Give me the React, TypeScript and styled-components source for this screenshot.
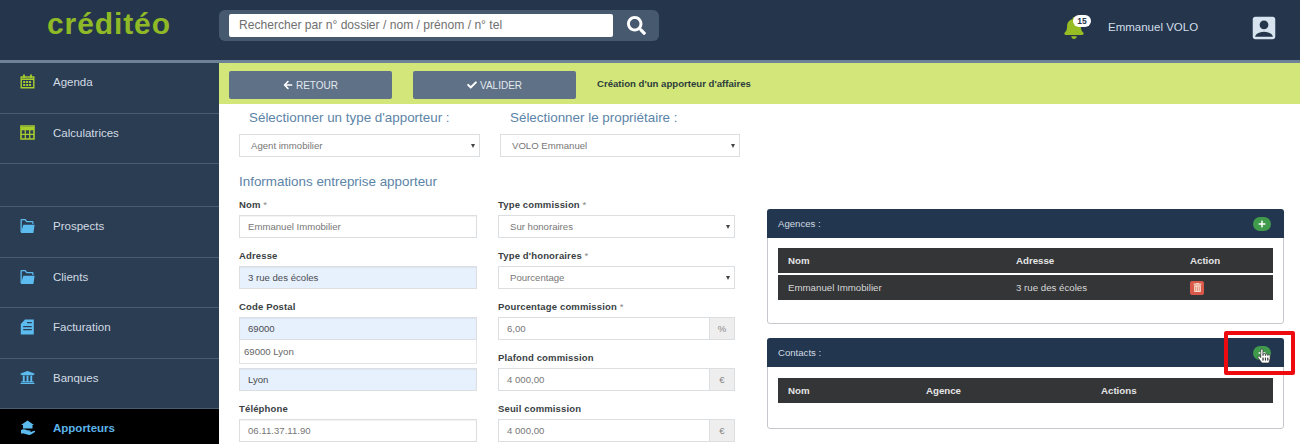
import styled, { createGlobalStyle } from "styled-components";
import { ReactNode } from "react";
import {
  FaArrowLeft,
  FaBell,
  FaCheck,
  FaHandPointer,
  FaPlus,
  FaSearch,
  FaTrashAlt,
  FaUniversity,
} from "react-icons/fa";
import { MdAccountBox } from "react-icons/md";

const CalendarIcon = () => (
  <svg width="15" height="15" viewBox="0 0 15 15" fill="none" stroke="currentColor">
    <path d="M1.2 3h12.6v10.8H1.2z" strokeWidth="1.4" />
    <path d="M1 5.2h13" strokeWidth="1.6" />
    <path d="M4 0.6v3.4M11 0.6v3.4" strokeWidth="1.8" />
    <path d="M3.2 8h8.6M3.2 11h8.6" strokeWidth="1.8" strokeDasharray="2 .9" />
  </svg>
);

const TableIcon = () => (
  <svg width="15" height="15" viewBox="0 0 15 15" fill="none" stroke="currentColor">
    <path d="M1 1h13v13H1z" strokeWidth="1.6" />
    <path d="M1 3.6h13" strokeWidth="3.4" />
    <path d="M1 9.4h13M5.3 5v9M9.7 5v9" strokeWidth="1.3" />
  </svg>
);

const FolderIcon = () => (
  <svg width="15" height="16" viewBox="0 0 15 16" fill="currentColor">
    <path d="M0.5 2 Q0.5 1 1.5 1 H5.5 L7 3 H12.5 Q13.5 3 13.5 4 V6 H12.3 V4.3 H6.3 L4.8 2.3 H1.8 V14 H0.5 Z" />
    <path d="M3.3 6.8 H14.6 L13.4 15 H0.8 Z" />
  </svg>
);

const InvoiceIcon = () => (
  <svg width="15" height="16" viewBox="0 0 15 16" fill="currentColor">
    <path
      fillRule="evenodd"
      d="M5 0.5 H13.8 V15.5 H0.8 V5 Z M7 3 V4.2 H11.8 V3 Z M3.2 7 V8.2 H11.8 V7 Z M3.2 10 V11.2 H11.8 V10 Z"
    />
  </svg>
);

const HandHouseIcon = () => (
  <svg width="16" height="16" viewBox="0 0 16 16" fill="currentColor">
    <path d="M7.5 0.5 L14 5 L12.5 5 L12.5 8.5 L3 8.5 L3 5 L1 5 Z" />
    <path d="M1 10 C3 8.8 5 9.2 7 10.2 L10 10.4 C11 10.5 11 11.8 10 11.8 L7.5 11.8 L11 12 L14 10.8 C15 10.6 15.5 11.6 14.6 12.2 L11 14.6 C9 15.4 6 14.4 4 13.6 L1 13.6 Z" />
  </svg>
);

const menuTop = [
  { label: "Agenda", icon: <CalendarIcon />, lime: true },
  { label: "Calculatrices", icon: <TableIcon />, lime: true },
];

const menuBottom = [
  { label: "Prospects", icon: <FolderIcon /> },
  { label: "Clients", icon: <FolderIcon /> },
  { label: "Facturation", icon: <InvoiceIcon /> },
  { label: "Banques", icon: <FaUniversity /> },
];

const Field = ({
  label,
  star,
  tall,
  children,
}: {
  label: string;
  star?: boolean;
  tall?: boolean;
  children: ReactNode;
}) => (
  <FieldBox $tall={tall}>
    <Label>
      {label}
      {star && <Star> *</Star>}
    </Label>
    {children}
  </FieldBox>
);

const Select = ({ value }: { value: string }) => (
  <SelectBox>
    {value}
    <Caret />
  </SelectBox>
);

const Addon = ({ value, unit }: { value: string; unit: string }) => (
  <AddonBox>
    <AddonValue>{value}</AddonValue>
    <AddonUnit>{unit}</AddonUnit>
  </AddonBox>
);

const App = () => {
  return (
    <Page>
      <GlobalStyle />
      <Header>
        <LogoBox>
          <Logo>créditéo</Logo>
        </LogoBox>
        <SearchGroup>
          <SearchInput>Rechercher par n° dossier / nom / prénom / n° tel</SearchInput>
          <SearchButton>
            <FaSearch />
          </SearchButton>
        </SearchGroup>
        <UserArea>
          <BellBox>
            <FaBell />
            <Badge>15</Badge>
          </BellBox>
          <UserName>Emmanuel VOLO</UserName>
          <UserIcon>
            <MdAccountBox />
          </UserIcon>
        </UserArea>
      </Header>
      <Body>
        <Sidebar>
          {menuTop.map((m) => (
            <MenuItem key={m.label}>
              <MenuIcon $lime={m.lime}>{m.icon}</MenuIcon>
              {m.label}
            </MenuItem>
          ))}
          <MenuGap />
          {menuBottom.map((m) => (
            <MenuItem key={m.label}>
              <MenuIcon>{m.icon}</MenuIcon>
              {m.label}
            </MenuItem>
          ))}
          <MenuActive>
            <MenuIcon>
              <HandHouseIcon />
            </MenuIcon>
            Apporteurs
          </MenuActive>
        </Sidebar>
        <Main>
          <ActionBar>
            <ActionButton>
              <FaArrowLeft />
              RETOUR
            </ActionButton>
            <ActionButton>
              <FaCheck />
              VALIDER
            </ActionButton>
            <ActionTitle>Création d'un apporteur d'affaires</ActionTitle>
          </ActionBar>
          <Content>
            <FormColumn>
              <TopSelects>
                <TopSelect>
                  <SelectTitle>Sélectionner un type d'apporteur :</SelectTitle>
                  <Select value="Agent immobilier" />
                </TopSelect>
                <TopSelect>
                  <SelectTitle>Sélectionner le propriétaire :</SelectTitle>
                  <Select value="VOLO Emmanuel" />
                </TopSelect>
              </TopSelects>
              <SectionTitle>Informations entreprise apporteur</SectionTitle>
              <FormGrid>
                <FormCol>
                  <Field label="Nom" star>
                    <Input>Emmanuel Immobilier</Input>
                  </Field>
                  <Field label="Adresse">
                    <Input $filled>3 rue des écoles</Input>
                  </Field>
                  <Field label="Code Postal" tall>
                    <Input $filled>69000</Input>
                    <Suggestion>69000 Lyon</Suggestion>
                    <CityInput $filled>Lyon</CityInput>
                  </Field>
                  <Field label="Téléphone">
                    <Input>06.11.37.11.90</Input>
                  </Field>
                </FormCol>
                <FormCol>
                  <Field label="Type commission" star>
                    <Select value="Sur honoraires" />
                  </Field>
                  <Field label="Type d'honoraires" star>
                    <Select value="Pourcentage" />
                  </Field>
                  <Field label="Pourcentage commission" star>
                    <Addon value="6,00" unit="%" />
                  </Field>
                  <Field label="Plafond commission">
                    <Addon value="4 000,00" unit="€" />
                  </Field>
                  <Field label="Seuil commission">
                    <Addon value="4 000,00" unit="€" />
                  </Field>
                </FormCol>
              </FormGrid>
            </FormColumn>
            <PanelColumn>
              <Panel $height={115}>
                <PanelHead>
                  Agences :
                  <AddButton>
                    <FaPlus />
                  </AddButton>
                </PanelHead>
                <DarkTable $top={10}>
                  <HeadRow $columns="228px 174px 1fr">
                    <span>Nom</span>
                    <span>Adresse</span>
                    <span>Action</span>
                  </HeadRow>
                  <DataRow $columns="228px 174px 1fr">
                    <span>Emmanuel Immobilier</span>
                    <span>3 rue des écoles</span>
                    <TrashButton>
                      <FaTrashAlt />
                    </TrashButton>
                  </DataRow>
                </DarkTable>
              </Panel>
              <Panel $height={91}>
                <PanelHead>
                  Contacts :
                  <AddButton>
                    <FaPlus />
                    <Cursor>
                      <FaHandPointer />
                    </Cursor>
                  </AddButton>
                  <Highlight />
                </PanelHead>
                <DarkTable $top={11}>
                  <HeadRow $columns="138px 175px 1fr">
                    <span>Nom</span>
                    <span>Agence</span>
                    <span>Actions</span>
                  </HeadRow>
                </DarkTable>
              </Panel>
            </PanelColumn>
          </Content>
        </Main>
      </Body>
    </Page>
  );
};

export default App;

const GlobalStyle = createGlobalStyle`
  html, body {
    margin: 0;
    padding: 0;
    background: #fff;
    overflow: hidden;
  }
  * {
    box-sizing: border-box;
  }
`;

const Page = styled.div`
  width: 1300px;
  height: 444px;
  overflow: hidden;
  font-family: "Liberation Sans", Arial, sans-serif;
  display: flex;
  flex-direction: column;
`;

const Header = styled.div`
  height: 63px;
  flex: none;
  background: #25364c;
  border-bottom: 3px solid #6d8197;
  display: flex;
  align-items: flex-start;
`;
const LogoBox = styled.div`
  width: 219px;
  flex: none;
  padding: 5px 0 0 47px;
`;
const Logo = styled.div`
  font-weight: 700;
  font-size: 30px;
  line-height: 38px;
  letter-spacing: 0.9px;
  color: #8fb927;
`;
const SearchGroup = styled.div`
  margin-top: 10px;
  width: 440px;
  height: 31px;
  padding: 4px 0 4px 10px;
  background: #47596f;
  border-radius: 6px;
  display: flex;
`;
const SearchInput = styled.div`
  width: 384px;
  height: 23px;
  background: #fff;
  border-radius: 2px;
  padding-left: 10px;
  font-size: 12.1px;
  line-height: 23px;
  color: #6f6f6f;
`;
const SearchButton = styled.div`
  flex: 1;
  display: flex;
  align-items: center;
  justify-content: center;
  color: #fff;
  font-size: 19px;
`;
const UserArea = styled.div`
  margin-left: auto;
  padding-right: 21px;
  display: flex;
  align-items: flex-start;
`;
const BellBox = styled.div`
  position: relative;
  margin-top: 17px;
  width: 21px;
  height: 22px;
  color: #97bd24;
  font-size: 22px;
  line-height: 22px;
`;
const Badge = styled.div`
  position: absolute;
  left: 10px;
  top: -2px;
  width: 18px;
  height: 12px;
  border-radius: 6px;
  background: #fff;
  color: #25364c;
  font-size: 8.5px;
  font-weight: 700;
  line-height: 12px;
  text-align: center;
`;
const UserName = styled.div`
  margin: 20px 0 0 24px;
  width: 141px;
  font-size: 11.5px;
  line-height: 14px;
  color: #d3dde8;
`;
const UserIcon = styled.div`
  margin-top: 13px;
  width: 30px;
  height: 30px;
  font-size: 30px;
  line-height: 30px;
  color: #d7e4f0;
`;

const Body = styled.div`
  flex: 1;
  display: flex;
  min-height: 0;
`;

const Sidebar = styled.div`
  width: 219px;
  flex: none;
  background: #2a3d53;
  display: flex;
  flex-direction: column;
`;
const MenuItem = styled.div`
  height: 50.5px;
  flex: none;
  padding: 11px 0 0 20px;
  border-bottom: 1px solid #4a5c71;
  display: flex;
  align-items: flex-start;
  font-size: 11.5px;
  line-height: 16px;
  color: #d3dbe3;
`;
const MenuGap = styled.div`
  height: 43px;
  flex: none;
  border-bottom: 1px solid #4a5c71;
`;
const MenuIcon = styled.span<{ $lime?: boolean }>`
  width: 33px;
  flex: none;
  font-size: 15px;
  line-height: 16px;
  color: ${(p) => (p.$lime ? "#a6cc2e" : "#5cbcf0")};
  svg {
    display: block;
  }
`;
const MenuActive = styled(MenuItem)`
  flex: 1;
  background: #000;
  border-bottom: 0;
  color: #5cb4ea;
  font-weight: 700;
`;

const Main = styled.div`
  flex: 1;
  min-width: 0;
  display: flex;
  flex-direction: column;
`;
const ActionBar = styled.div`
  height: 41px;
  flex: none;
  background: #d3e67a;
  padding: 8px 0 0 10px;
  display: flex;
  align-items: flex-start;
  gap: 21px;
`;
const ActionButton = styled.div`
  width: 163px;
  height: 28px;
  background: #5f7186;
  border-radius: 2px;
  display: flex;
  align-items: center;
  justify-content: center;
  gap: 3px;
  font-size: 10px;
  color: #e3e8ee;
  svg {
    font-size: 10px;
    color: #fff;
  }
`;
const ActionTitle = styled.div`
  font-size: 9.6px;
  font-weight: 700;
  line-height: 26px;
  color: #2c3c3a;
`;

const Content = styled.div`
  flex: 1;
  min-height: 0;
  display: flex;
`;
const FormColumn = styled.div`
  width: 548px;
  flex: none;
  padding-left: 20px;
`;
const TopSelects = styled.div`
  display: grid;
  grid-template-columns: 241px 240px;
  column-gap: 20px;
`;
const TopSelect = styled.div``;
const SelectTitle = styled.div`
  padding: 5px 0 0 10px;
  height: 30px;
  font-size: 13.4px;
  line-height: 18px;
  color: #5c84a8;
`;
const SectionTitle = styled.div`
  margin-top: 15px;
  height: 22px;
  font-size: 13.4px;
  line-height: 20px;
  color: #5c84a8;
`;
const FormGrid = styled.div`
  display: grid;
  grid-template-columns: 238px 237px;
  column-gap: 21px;
  margin-top: 5px;
`;
const FormCol = styled.div`
  display: flex;
  flex-direction: column;
`;
const FieldBox = styled.div<{ $tall?: boolean }>`
  height: ${(p) => (p.$tall ? 102 : 51)}px;
  flex: none;
`;
const Label = styled.div`
  height: 13px;
  margin-bottom: 3px;
  font-size: 9.5px;
  font-weight: 700;
  line-height: 12px;
  letter-spacing: 0.15px;
  color: #3a3f44;
`;
const Star = styled.span`
  font-weight: 400;
  color: #888;
`;
const Input = styled.div<{ $filled?: boolean }>`
  height: 23px;
  padding-left: 8px;
  background: ${(p) => (p.$filled ? "#e7f0fd" : "#fff")};
  border: 1px solid #dcdfe2;
  box-shadow: inset 0 1px 1px rgba(0, 0, 0, 0.05);
  font-size: 9.6px;
  line-height: 21px;
  color: ${(p) => (p.$filled ? "#4a4d50" : "#777")};
`;
const Suggestion = styled.div`
  height: 24px;
  padding-left: 4px;
  background: #fff;
  border: 1px solid #e2e4e6;
  border-top: 0;
  font-size: 9.6px;
  line-height: 24px;
  color: #666;
`;
const CityInput = styled(Input)`
  margin-top: 4px;
`;
const SelectBox = styled.div`
  position: relative;
  height: 23px;
  padding-left: 11px;
  background: #fff;
  border: 1px solid #dcdfe2;
  font-size: 9.6px;
  line-height: 21px;
  color: #777;
`;
const Caret = styled.span`
  position: absolute;
  right: 4px;
  top: 9px;
  border-left: 2.5px solid transparent;
  border-right: 2.5px solid transparent;
  border-top: 4px solid #444;
`;
const AddonBox = styled.div`
  height: 23px;
  display: flex;
  border: 1px solid #dcdfe2;
`;
const AddonValue = styled.div`
  flex: 1;
  padding-left: 8px;
  font-size: 9.6px;
  line-height: 21px;
  color: #777;
`;
const AddonUnit = styled.div`
  width: 25px;
  background: #eeeeee;
  border-left: 1px solid #dcdfe2;
  font-size: 9.6px;
  line-height: 21px;
  text-align: center;
  color: #888;
`;

const PanelColumn = styled.div`
  width: 517px;
  flex: none;
  padding-top: 105px;
  display: flex;
  flex-direction: column;
  gap: 14px;
`;
const Panel = styled.div<{ $height: number }>`
  height: ${(p) => p.$height}px;
  flex: none;
  border: 1px solid #c4c8cc;
  border-radius: 3px;
`;
const PanelHead = styled.div`
  position: relative;
  height: 29px;
  margin: -1px -1px 0;
  padding: 0 12px 0 11px;
  background: #22374f;
  border-radius: 3px 3px 0 0;
  display: flex;
  align-items: center;
  justify-content: space-between;
  font-size: 9.6px;
  color: #d3dbe3;
`;
const AddButton = styled.div`
  position: relative;
  width: 18px;
  height: 14px;
  border-radius: 7px;
  margin-right: 1px;
  background: #3f9a4c;
  color: #fff;
  display: flex;
  align-items: center;
  justify-content: center;
  font-size: 8px;
`;
const Cursor = styled.span`
  position: absolute;
  left: 4px;
  top: 3px;
  font-size: 14px;
  line-height: 14px;
  color: #fff;
  svg {
    display: block;
    stroke: #222;
    stroke-width: 24px;
    overflow: visible;
  }
`;
const Highlight = styled.div`
  position: absolute;
  right: -11px;
  top: -7px;
  width: 71px;
  height: 44px;
  border: 4px solid #ee0b10;
  border-radius: 2px;
`;
const DarkTable = styled.div<{ $top: number }>`
  margin: ${(p) => p.$top}px 10px 0;
`;
const HeadRow = styled.div<{ $columns: string }>`
  height: 25px;
  background: #333537;
  padding-left: 10px;
  display: grid;
  grid-template-columns: ${(p) => p.$columns};
  align-items: center;
  font-size: 9.7px;
  font-weight: 700;
  color: #e6e6e6;
`;
const DataRow = styled.div<{ $columns: string }>`
  height: 25px;
  margin-top: 2px;
  background: #333537;
  padding-left: 10px;
  display: grid;
  grid-template-columns: ${(p) => p.$columns};
  align-items: center;
  font-size: 9.7px;
  color: #d8d8d8;
`;
const TrashButton = styled.div`
  width: 14px;
  height: 14px;
  border-radius: 2px;
  background: #d9584a;
  color: #f6d9c8;
  display: flex;
  align-items: center;
  justify-content: center;
  font-size: 9px;
`;
